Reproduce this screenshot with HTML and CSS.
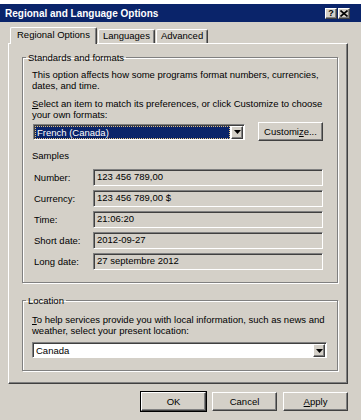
FILE: index.html
```html
<!DOCTYPE html>
<html lang="en">
<head>
    <meta charset="UTF-8">
    <meta name="viewport" content="width=device-width, initial-scale=1.0">
    <title>Regional and Language Options</title>
    <link rel="stylesheet" href="styles.css">
</head>
<body>
    <div class="window">
        <div class="titlebar">
            <span class="title">Regional and Language Options</span>
            <div class="caption-buttons">
                <span class="cap-btn">?</span>
                <span class="cap-btn">
                    <svg width="8" height="7" viewBox="0 0 8 7"><path d="M0.5 0.5 L7.5 6.5 M7.5 0.5 L0.5 6.5" stroke="#000" stroke-width="1.6"/></svg>
                </span>
            </div>
        </div>

        <div class="tabs">
            <div class="tab active">Regional Options</div>
            <div class="tab">Languages</div>
            <div class="tab">Advanced</div>
        </div>

        <div class="panel">
            <fieldset class="group standards">
                <legend>Standards and formats</legend>
                <p class="intro">This option affects how some programs format numbers, currencies,<br>dates, and time.</p>
                <p class="intro"><u>S</u>elect an item to match its preferences, or click Customize to choose<br>your own formats:</p>

                <div class="format-row">
                    <div class="combo">
                        <span class="combo-text selected">French (Canada)</span>
                        <span class="drop-btn"><svg width="7" height="4" viewBox="0 0 7 4"><path d="M0 0 H7 L3.5 4 Z" fill="#000"/></svg></span>
                    </div>
                    <button type="button" class="btn customize">Customi<u>z</u>e...</button>
                </div>

                <div class="samples-title">Samples</div>
                <div class="samples">
                    <span class="sample-label">Number:</span>
                    <span class="sample-field">123 456 789,00</span>
                    <span class="sample-label">Currency:</span>
                    <span class="sample-field">123 456 789,00 $</span>
                    <span class="sample-label">Time:</span>
                    <span class="sample-field">21:06:20</span>
                    <span class="sample-label">Short date:</span>
                    <span class="sample-field">2012-09-27</span>
                    <span class="sample-label">Long date:</span>
                    <span class="sample-field">27 septembre 2012</span>
                </div>
            </fieldset>

            <fieldset class="group location">
                <legend>Location</legend>
                <p class="intro"><u>T</u>o help services provide you with local information, such as news and<br>weather, select your present location:</p>
                <div class="combo wide">
                    <span class="combo-text">Canada</span>
                    <span class="drop-btn"><svg width="7" height="4" viewBox="0 0 7 4"><path d="M0 0 H7 L3.5 4 Z" fill="#000"/></svg></span>
                </div>
            </fieldset>
        </div>

        <div class="actions">
            <button type="button" class="btn default">OK</button>
            <button type="button" class="btn">Cancel</button>
            <button type="button" class="btn"><u>A</u>pply</button>
        </div>
    </div>
</body>
</html>
```

FILE: styles.css
```css
body {
    margin: 0;
    background: #fff;
    font-family: "Liberation Sans", Arial, sans-serif;
    font-size: 9.5px;
    color: #000;
}
.window {
    margin-top: 4px;
    height: 416px;
    background: #d4d0c8;
}
.titlebar {
    height: 18px;
    background: #0a246a;
    color: #fff;
    display: flex;
    align-items: center;
    justify-content: space-between;
    padding: 0 11px 0 5px;
}
.title {
    font-weight: bold;
    font-size: 10px;
}
.caption-buttons {
    display: flex;
    gap: 1px;
}
.cap-btn {
    width: 12px;
    height: 11px;
    box-sizing: border-box;
    background: #d4d0c8;
    color: #000;
    font-weight: bold;
    font-size: 9px;
    line-height: 9px;
    display: flex;
    align-items: center;
    justify-content: center;
    border: 1px solid;
    border-color: #fff #404040 #404040 #fff;
    box-shadow: inset -1px -1px 0 #808080;
}

/* tabs */
.tabs {
    display: flex;
    align-items: flex-end;
    height: 15px;
    margin-top: 6px;
    padding-left: 10px;
    position: relative;
    z-index: 1;
}
.tab {
    height: 13px;
    line-height: 12px;
    padding: 0 4px;
    border: 1px solid;
    border-bottom: none;
    border-color: #fff #404040 #fff #fff;
    box-shadow: inset -1px 0 0 #808080;
    border-radius: 2px 2px 0 0;
    background: #d4d0c8;
}
.tab.active {
    height: 16px;
    line-height: 14px;
    margin-bottom: -1px;
    padding: 0 6px;
}
.tab + .tab {
    margin-left: 1px;
}

.panel {
    margin: 0 13px 0 8px;
    height: 341px;
    box-sizing: border-box;
    border: 1px solid;
    border-color: #fff #404040 #404040 #fff;
    box-shadow: inset -1px -1px 0 #808080;
    padding: 8px 9px 0 13px;
}

/* group boxes */
.group {
    margin: 0;
    border: 1px solid #808080;
    box-shadow: inset 1px 1px 0 #fff, 1px 1px 0 #fff;
    padding: 6px 10px 12px 9px;
}
.group legend {
    padding: 0 2px;
    margin-left: -6px;
    line-height: 11px;
}
.intro {
    margin: 0;
    line-height: 11px;
}
.intro + .intro {
    margin-top: 7px;
}
.format-row {
    display: flex;
    align-items: center;
    justify-content: space-between;
    margin: 2px 4px 0 1px;
    height: 19px;
}
.combo {
    width: 212px;
    height: 16px;
    box-sizing: border-box;
    display: flex;
    background: #fff;
    border: 1px solid;
    border-color: #808080 #fff #fff #808080;
    box-shadow: inset 1px 1px 0 #404040;
    padding: 1px 1px 0 1px;
}
.combo-text {
    flex: 1;
    line-height: 13px;
    padding-left: 2px;
}
.combo-text.selected {
    background: #0a246a;
    color: #fff;
    outline: 1px dotted #e0c080;
    outline-offset: -1px;
    margin-right: 1px;
}
.drop-btn {
    width: 12px;
    height: 13px;
    box-sizing: border-box;
    background: #d4d0c8;
    border: 1px solid;
    border-color: #fff #404040 #404040 #fff;
    box-shadow: inset -1px -1px 0 #808080;
    display: flex;
    align-items: center;
    justify-content: center;
}
.btn {
    font: inherit;
    color: #000;
    width: 65px;
    height: 19px;
    padding: 0;
    background: #d4d0c8;
    border: 1px solid;
    border-color: #fff #404040 #404040 #fff;
    box-shadow: inset -1px -1px 0 #808080;
}
.btn.default {
    outline: 1px solid #000;
    outline-offset: 0;
}
.samples-title {
    line-height: 11px;
    margin-top: 9px;
}
.samples {
    display: grid;
    grid-template-columns: 59px 1fr;
    row-gap: 4px;
    align-items: center;
    margin: 8px 4px 0 2px;
}
.sample-field {
    height: 17px;
    box-sizing: border-box;
    line-height: 14px;
    padding-left: 3px;
    border: 1px solid;
    border-color: #808080 #fff #fff #808080;
    box-shadow: inset 1px 1px 0 #404040;
}
.location {
    margin-top: 12px;
    padding-top: 8px;
}
.combo.wide {
    width: auto;
    margin-top: 6px;
}

.actions {
    display: flex;
    justify-content: flex-end;
    gap: 6px;
    margin-top: 8px;
    padding-right: 13px;
}
```
